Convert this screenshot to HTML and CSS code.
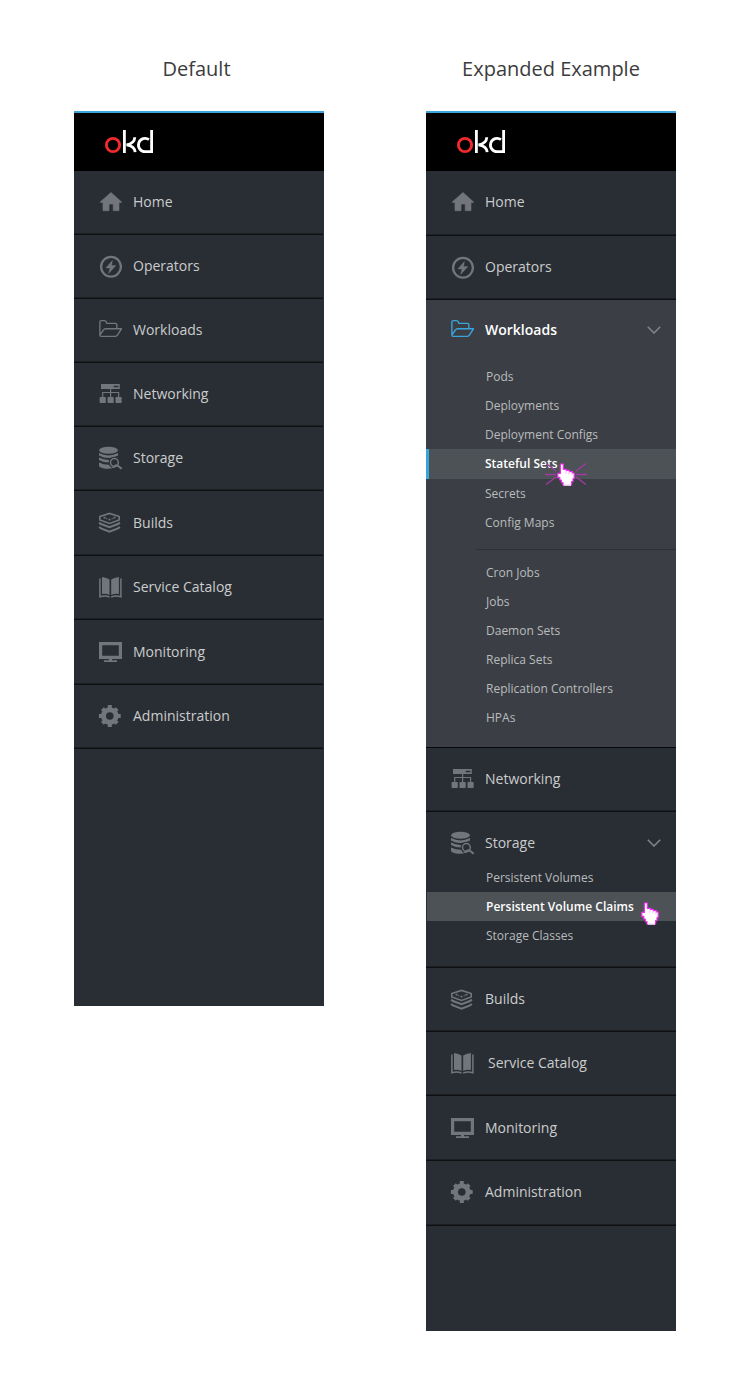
FILE: index.html
```html
<!DOCTYPE html>
<html lang="en">
<head>
<meta charset="utf-8">
<title>OKD navigation</title>
<link rel="stylesheet" href="styles.css">
</head>
<body>
<svg class="sprite" aria-hidden="true">
  <symbol id="logo" viewBox="0 0 50 24">
    <circle cx="9" cy="15" r="6.6" fill="none" stroke="#ee2a2a" stroke-width="2.9"/>
    <g fill="none" stroke="#fff" stroke-width="2.8">
      <path d="M20.4 0V23M47.6 0V23"/>
      <path d="M30.8 7.2C30.6 11 28 13.8 22.6 14.8C28 15.6 30.8 18.4 31.2 22.2"/>
      <path d="M45 9.7A6.6 6.6 0 1 0 41 21.6H48"/>
    </g>
  </symbol>
  <symbol id="home" viewBox="0 0 24 24">
    <path fill="currentColor" stroke="currentColor" stroke-width=".6" stroke-linejoin="round" d="M13 2.4L23.4 11.8V12.4H21V20.7H15.2V14H11V20.7H5V12.4H2.4V11.8Z"/>
  </symbol>
  <symbol id="operators" viewBox="0 0 24 24">
    <circle cx="13" cy="12.7" r="9.9" fill="none" stroke="currentColor" stroke-width="2.3"/>
    <path fill="currentColor" stroke="currentColor" stroke-width=".4" d="M14.4 6.5L7.8 14H12L10.6 19.5L17.9 11.6H13.6Z"/>
  </symbol>
  <symbol id="workloads" viewBox="0 0 24 24">
    <path fill="none" stroke="currentColor" stroke-width="1.35" stroke-linejoin="round" d="M1.9 17.4V4Q1.9 2.6 3.3 2.6H6.6Q7.8 2.6 8.2 3.8L8.7 5.3H17.4Q18.9 5.3 18.9 6.8V8V10.7M1.9 17.2L5.4 12Q6.2 10.7 7.6 10.7H23.5L19.6 16.9Q18.8 18.3 17.4 18.3H3Q1.9 18.3 1.9 17.2"/>
  </symbol>
  <symbol id="networking" viewBox="0 0 24 24">
    <path fill="currentColor" fill-rule="evenodd" d="M3 2H21.8V7H3ZM15.7 3.7V5.2H20.4V3.7Z"/>
    <path fill="none" stroke="currentColor" stroke-width="1.2" d="M12.6 7V15.5M4.7 15.5V10.5H20.6V15.5"/>
    <g fill="currentColor"><rect x="1.6" y="15" width="6.2" height="6.1" rx=".8"/><rect x="9.5" y="15" width="6.2" height="6.1" rx=".8"/><rect x="17.5" y="15" width="6.2" height="6.1" rx=".8"/></g>
  </symbol>
  <symbol id="storage" viewBox="0 0 24 24">
    <g fill="currentColor">
      <ellipse cx="10.5" cy="4.3" rx="9.5" ry="3.5"/>
      <path d="M1 7Q10.5 11.8 20 7V9.4Q10.5 14.6 1 9.4Z"/>
      <path d="M1 11.6Q10.5 16.4 20 11.6V14Q10.5 19.2 1 14Z"/>
      <path d="M1 16.4Q10.5 21.2 20 16.4V20Q16 22.8 10.5 22.8Q4 22.8 1 20.2Z"/>
    </g>
    <path class="gap" d="M16.4 10.7a5.8 5.8 0 1 0 .1 0ZM18 18L24 24H14V21Z"/>
    <circle cx="16.4" cy="16.5" r="3.9" fill="none" stroke="currentColor" stroke-width="1.5"/>
    <path d="M19.3 19.2L23.6 22.7" stroke="currentColor" stroke-width="1.9"/>
  </symbol>
  <symbol id="builds" viewBox="0 0 24 24">
    <g fill="none" stroke="currentColor" stroke-width="1.6">
      <path d="M1.8 6.6L11.5 3.4L21.2 6.6M1.8 6V9.9L11.5 13.4L21.2 9.9V6"/>
      <path stroke-width="2" d="M1.1 12.6L3 14L11.5 17.3L20 14L21.9 12.6M1.1 17L3 18.4L11.5 21.7L20 18.4L21.9 17"/>
    </g>
    <g fill="currentColor"><rect x="5.6" y="6.8" width="2" height="1.7"/><rect x="10.5" y="8.8" width="2" height="1.6"/><rect x="15.4" y="6.8" width="2" height="1.7"/><rect x="8.2" y="8.2" width="1.2" height="1.2"/><rect x="13.6" y="8.2" width="1.2" height="1.2"/></g>
  </symbol>
  <symbol id="catalog" viewBox="0 0 24 24">
    <path fill="currentColor" d="M4 2Q8.8 2.5 11.5 4.5V20Q8.5 18.4 4 18.9ZM20.9 2Q16 2.5 13.2 4.5V20Q16 18.4 20.9 18.9Z"/>
    <path fill="none" stroke="currentColor" stroke-width="1.5" d="M1.9 3.4V21.7Q7.5 20 11.6 22.1M22.9 3.4V21.7Q17.3 20 13.1 22.1"/>
  </symbol>
  <symbol id="monitoring" viewBox="0 0 24 24">
    <path fill="currentColor" fill-rule="evenodd" d="M1 3H24V20H14V21.2H19V23H6V21.2H11V20H1ZM4.2 6.2V16.8H20.8V6.2Z"/>
  </symbol>
  <symbol id="admin" viewBox="0 0 24 24">
    <circle cx="11.8" cy="12" r="6.3" fill="none" stroke="currentColor" stroke-width="5"/>
    <path stroke="currentColor" stroke-width="4" d="M11.8 1V5M11.8 19V23M.9 12H5M18.6 12H22.7M4.4 4.6L7 7.2M16.6 16.8L19.2 19.4M4.4 19.4L7 16.8M16.6 7.2L19.2 4.6"/>
  </symbol>
  <symbol id="chevron" viewBox="0 0 14 8">
    <path fill="none" stroke="currentColor" stroke-width="1.6" d="M.8 .8L7 7L13.2 .8"/>
  </symbol>
  <symbol id="hand" viewBox="0 0 18 23">
    <path fill="#fff" stroke="#f32df0" stroke-width="1.2" stroke-linejoin="round" d="M3.4 1H6.4V6.4H9.4V7.4H12.4V8.6H15.4V10H17.2V15.6H16V18.6H14.6V22H6V19.6H4.4V17H2.8V14.4H.8V10.4H3.4Z"/>
    <path fill="none" stroke="#f7a4f4" stroke-width=".8" d="M9 7.6V10.6M12 8.8V11.4M14.8 10V12"/>
    <path stroke="#fff" stroke-width="1.4" d="M6.6 22H14"/>
  </symbol>
</svg>

<main class="board">
  <section class="sample">
    <h2 class="caption caption-default">Default</h2>
    <nav class="panel panel-default">
      <header class="brand"><svg class="logo"><use href="#logo"/></svg></header>
      <div class="row"><svg class="icon"><use href="#home"/></svg><span>Home</span></div>
      <div class="row"><svg class="icon"><use href="#operators"/></svg><span>Operators</span></div>
      <div class="row"><svg class="icon"><use href="#workloads"/></svg><span>Workloads</span></div>
      <div class="row"><svg class="icon"><use href="#networking"/></svg><span>Networking</span></div>
      <div class="row"><svg class="icon"><use href="#storage"/></svg><span>Storage</span></div>
      <div class="row tall"><svg class="icon"><use href="#builds"/></svg><span class="low">Builds</span></div>
      <div class="row"><svg class="icon"><use href="#catalog"/></svg><span>Service Catalog</span></div>
      <div class="row tall"><svg class="icon"><use href="#monitoring"/></svg><span class="low">Monitoring</span></div>
      <div class="row"><svg class="icon"><use href="#admin"/></svg><span>Administration</span></div>
    </nav>
  </section>

  <section class="sample">
    <h2 class="caption">Expanded Example</h2>
    <nav class="panel panel-expanded">
      <header class="brand"><svg class="logo"><use href="#logo"/></svg></header>
      <div class="row tall"><svg class="icon"><use href="#home"/></svg><span>Home</span></div>
      <div class="row"><svg class="icon"><use href="#operators"/></svg><span>Operators</span></div>
      <div class="group group-active">
        <div class="group-head"><svg class="icon"><use href="#workloads"/></svg><span>Workloads</span><svg class="chevron"><use href="#chevron"/></svg></div>
        <ul class="menu">
          <li class="item inset">Pods</li>
          <li class="item">Deployments</li>
          <li class="item">Deployment Configs</li>
          <li class="item selected marked">Stateful Sets
            <svg class="click" viewBox="0 0 42 24"><g stroke="#a03ba3" stroke-width="1.3"><path d="M1 1.5L11 9M0 12.5H11M1 22.5L11 15M41 1.5L31 9M42 12.5H31M41 22.5L31 15"/></g></svg>
            <svg class="hand hand-click"><use href="#hand"/></svg>
          </li>
          <li class="item">Secrets</li>
          <li class="item">Config Maps</li>
        </ul>
        <ul class="menu menu-more">
          <li class="item">Cron Jobs</li>
          <li class="item">Jobs</li>
          <li class="item">Daemon Sets</li>
          <li class="item">Replica Sets</li>
          <li class="item">Replication Controllers</li>
          <li class="item">HPAs</li>
        </ul>
      </div>
      <div class="row"><svg class="icon"><use href="#networking"/></svg><span>Networking</span></div>
      <div class="group group-storage">
        <div class="group-head"><svg class="icon"><use href="#storage"/></svg><span>Storage</span><svg class="chevron"><use href="#chevron"/></svg></div>
        <ul class="menu">
          <li class="item inset">Persistent Volumes</li>
          <li class="item inset selected">Persistent Volume Claims
            <svg class="hand hand-hover"><use href="#hand"/></svg>
          </li>
          <li class="item inset">Storage Classes</li>
        </ul>
      </div>
      <div class="row"><svg class="icon"><use href="#builds"/></svg><span>Builds</span></div>
      <div class="row"><svg class="icon"><use href="#catalog"/></svg><span class="indent">Service Catalog</span></div>
      <div class="row tall"><svg class="icon"><use href="#monitoring"/></svg><span class="low">Monitoring</span></div>
      <div class="row tall"><svg class="icon"><use href="#admin"/></svg><span>Administration</span></div>
    </nav>
  </section>
</main>
</body>
</html>
```
FILE: styles.css
```css
* { box-sizing: border-box; }

body {
  margin: 0;
  background: #fff;
  font-family: "Open Sans", "Noto Sans", sans-serif;
}

.sprite { position: absolute; width: 0; height: 0; }
.gap { fill: #292e34; }

.board {
  display: flex;
  gap: 102px;
  align-items: flex-start;
  padding: 54px 0 0 74px;
  height: 1378px;
}

.sample { width: 250px; }

.caption {
  margin: 0;
  height: 57px;
  font-size: 20px;
  line-height: 30px;
  font-weight: 400;
  text-align: center;
  color: #3c3c3c;
  white-space: nowrap;
}

.caption-default { padding-right: 5px; }

.panel {
  background: #292e34;
  color: #cbcccd;
  font-size: 14px;
  line-height: 24px;
}
.panel-default { height: 895px; }
.panel-expanded { height: 1220px; }

.brand {
  height: 60px;
  padding: 17px 0 0 30px;
  background: #000;
  border-top: 2px solid #39a5dc;
}
.logo { display: block; width: 50px; height: 24px; }

.row {
  display: flex;
  gap: 11px;
  height: 64px;
  padding: 19px 0 0 24px;
  border-bottom: 1px solid #0e1012;
  box-shadow: inset 0 -1px #1b1f23;
}
.tall { height: 65px; }
.panel-default .row { margin-right: 1px; }
.indent { padding-left: 3px; }
.low { padding-top: 1px; }

.icon { display: block; flex: none; width: 24px; height: 24px; color: #72767b; }

.group { border-bottom: 1px solid #08090a; }
.group-head {
  display: flex;
  gap: 11px;
  height: 62px;
  padding: 18px 15px 0 24px;
}
.group-active { height: 448px; background: #3b3f45; }
.group-active .group-head { color: #fff; font-weight: 600; }
.group-active .icon { color: #39a5dc; }

.chevron { width: 14px; height: 8px; margin: 8px 0 0 auto; color: #7f8386; }

.menu {
  margin: 0;
  padding: 0;
  list-style: none;
  font-size: 12px;
  color: #b9bbbd;
}
.item {
  position: relative;
  height: 29.15px;
  padding-left: 59px;
  line-height: 29px;
}
.inset { padding-left: 60px; }
.selected { background: #4d5256; color: #fff; font-weight: 600; }
.marked { border-left: 3px solid #39a5dc; padding-left: 56px; }

.menu-more {
  margin: 12px 0 0 50px;
  padding-top: 8px;
  border-top: 1px solid #2c3035;
}
.menu-more .item { padding-left: 10px; height: 29.05px; }

.group-storage {
  height: 156px;
  border-bottom-color: #0e1012;
  box-shadow: inset 0 -1px #1b1f23;
}
.group-storage .group-head { height: 51px; padding-top: 19px; }
.group-storage .selected { margin-left: 1px; padding-left: 59px; letter-spacing: .02px; }

.click { position: absolute; left: 116px; top: 13px; width: 42px; height: 24px; }
.hand { position: absolute; width: 18px; height: 23px; }
.hand-click { left: 128px; top: 14px; }
.hand-hover { left: 214px; top: 10px; }
```
